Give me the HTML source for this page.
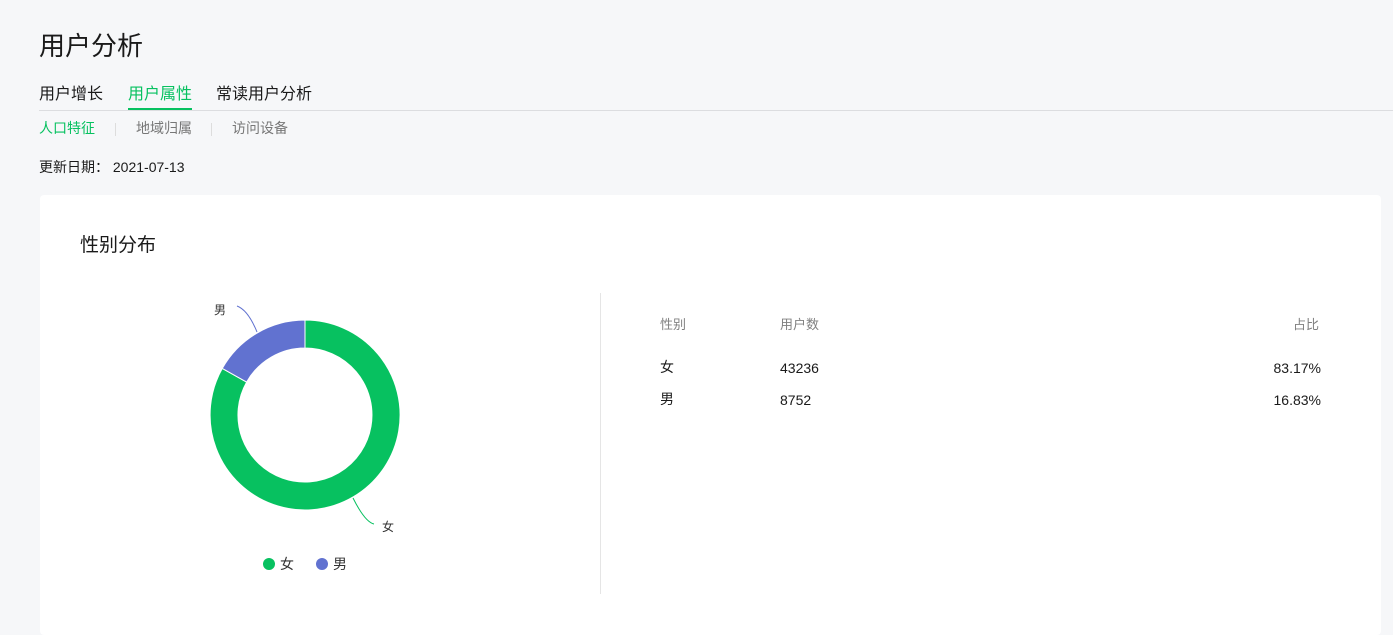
<!DOCTYPE html>
<html><head><meta charset="utf-8"><style>
*{margin:0;padding:0;box-sizing:border-box}
body{width:1393px;height:626px;overflow:hidden;background:#f6f7f9;font-family:"Liberation Sans","Noto Sans CJK SC",sans-serif;color:#353535;position:relative}
.a{position:absolute;white-space:nowrap}
</style></head><body>
<div class="a" style="left:39px;top:26px;font-size:26px;color:#1a1a1a">用户分析</div>
<div class="a" style="left:39px;top:80px;font-size:16px;color:#1a1a1a">用户增长</div>
<div class="a" style="left:128px;top:80px;font-size:16px;color:#07c160">用户属性</div>
<div class="a" style="left:128px;top:108px;width:64px;height:3px;background:#07c160"></div>
<div class="a" style="left:216px;top:80px;font-size:16px;color:#1a1a1a">常读用户分析</div>
<div class="a" style="left:39px;top:110px;width:1354px;height:1px;background:#dcdde0"></div>
<div class="a" style="left:39px;top:118px;font-size:14px;color:#07c160">人口特征</div>
<div class="a" style="left:115px;top:123px;width:1px;height:13px;background:#ddd"></div>
<div class="a" style="left:136px;top:118px;font-size:14px;color:#777">地域归属</div>
<div class="a" style="left:211px;top:123px;width:1px;height:13px;background:#ddd"></div>
<div class="a" style="left:232px;top:118px;font-size:14px;color:#777">访问设备</div>
<div class="a" style="left:39px;top:157px;font-size:14px;color:#1a1a1a">更新日期：&nbsp;2021-07-13</div>
<div class="a" style="left:40px;top:195px;width:1341px;height:440px;background:#fff;border-radius:4px"></div>
<div class="a" style="left:80px;top:230px;font-size:19px;color:#1a1a1a">性别分布</div>
<div class="a" style="left:600px;top:293px;width:1px;height:301px;background:#e5e5e5"></div>
<svg class="a" style="left:0;top:0" width="1393" height="626">
<path d="M305 320 A95 95 0 1 1 222.3 368.4 L246.6 382.1 A67 67 0 1 0 305 348 Z" fill="#07c160" stroke="#fff" stroke-width="1"/>
<path d="M305 320 A95 95 0 0 0 222.3 368.4 L246.6 382.1 A67 67 0 0 1 305 348 Z" fill="#6172d0" stroke="#fff" stroke-width="1"/>
<path d="M257 332 Q248 310 237 306" fill="none" stroke="#6172d0"/>
<path d="M353 498 Q365 522 374 524" fill="none" stroke="#07c160"/>
<text x="214" y="314" font-size="12" fill="#333" font-family="Noto Sans CJK SC">男</text>
<text x="382" y="531" font-size="12" fill="#333" font-family="Noto Sans CJK SC">女</text>
<circle cx="269" cy="564" r="6" fill="#07c160"/>
<text x="280" y="569" font-size="14" fill="#333" font-family="Noto Sans CJK SC">女</text>
<circle cx="322" cy="564" r="6" fill="#6172d0"/>
<text x="333" y="569" font-size="14" fill="#333" font-family="Noto Sans CJK SC">男</text>
</svg>
<div class="a" style="left:660px;top:314px;font-size:13px;color:#808080">性别</div>
<div class="a" style="left:780px;top:314px;font-size:13px;color:#808080">用户数</div>
<div class="a" style="left:1293px;top:314px;font-size:13px;color:#808080">占比</div>
<div class="a" style="left:660px;top:357px;font-size:14px;color:#1a1a1a">女</div>
<div class="a" style="left:780px;top:360px;font-size:14px;color:#1a1a1a">43236</div>
<div class="a" style="left:1220px;top:360px;width:101px;text-align:right;font-size:14px;color:#1a1a1a">83.17%</div>
<div class="a" style="left:660px;top:389px;font-size:14px;color:#1a1a1a">男</div>
<div class="a" style="left:780px;top:392px;font-size:14px;color:#1a1a1a">8752</div>
<div class="a" style="left:1220px;top:392px;width:101px;text-align:right;font-size:14px;color:#1a1a1a">16.83%</div>
</body></html>
